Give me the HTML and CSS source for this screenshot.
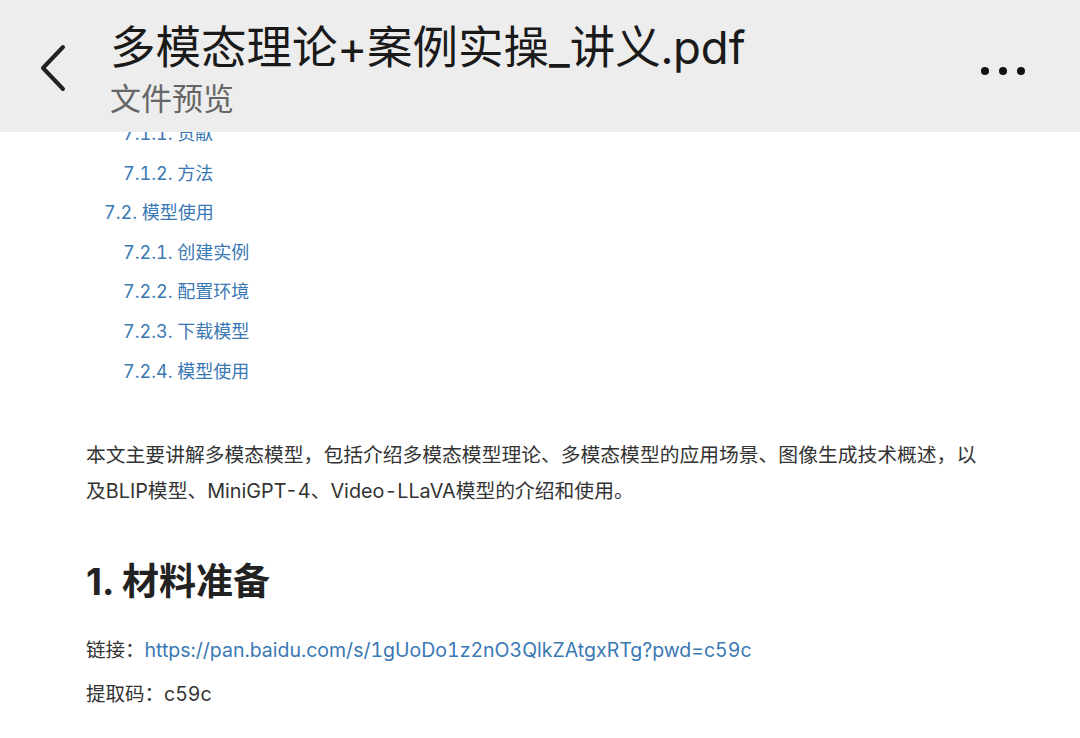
FILE: index.html
```html
<!DOCTYPE html>
<html lang="zh-CN">
<head>
<meta charset="utf-8">
<title>文件预览</title>
<link rel="stylesheet" href="styles.css">
</head>
<body>
<header class="topbar">
  <div class="back">
    <svg width="30" height="48" viewBox="0 0 30 48"><path d="M25 3 L5 24 L25 45" fill="none" stroke="#222" stroke-width="4" stroke-linecap="round" stroke-linejoin="round"/></svg>
  </div>
  <div class="titles">
    <div class="title">多模态理论+案例实操_讲义.pdf</div>
    <div class="subtitle">文件预览</div>
  </div>
  <div class="more"><span></span><span></span><span></span></div>
</header>
<main class="doc">
  <ul class="toc">
    <li class="l3">7.1.1. 贡献</li>
    <li class="l3">7.1.2. 方法</li>
    <li class="l2">7.2. 模型使用</li>
    <li class="l3">7.2.1. 创建实例</li>
    <li class="l3">7.2.2. 配置环境</li>
    <li class="l3">7.2.3. 下载模型</li>
    <li class="l3">7.2.4. 模型使用</li>
  </ul>
  <p class="intro">本文主要讲解多模态模型，包括介绍多模态模型理论、多模态模型的应用场景、图像生成技术概述，以及BLIP模型、MiniGPT-4、Video-LLaVA模型的介绍和使用。</p>
  <h1 class="h1">1. 材料准备</h1>
  <p class="line">链接：<a class="link">https://pan.baidu.com/s/1gUoDo1z2nO3QlkZAtgxRTg?pwd=c59c</a></p>
  <p class="line code">提取码：c59c</p>
</main>
</body>
</html>
```
FILE: styles.css
```css
html, body {
  margin: 0;
  padding: 0;
  background: #ffffff;
  font-family: "Inter", "Noto Sans CJK SC", sans-serif;
  font-variant-numeric: tabular-nums;
  color: #333;
}
.topbar {
  position: fixed;
  top: 0;
  left: 0;
  right: 0;
  height: 132px;
  background: #ededed;
  display: flex;
  align-items: flex-start;
  z-index: 10;
}
.back {
  width: 110px;
  padding-left: 38px;
  padding-top: 44px;
  box-sizing: border-box;
}
.back svg { display: block; }
.titles {
  flex: 1;
  padding-top: 19px;
}
.title {
  font-size: 45.5px;
  line-height: 58px;
  color: #1a1a1a;
}
.subtitle {
  font-size: 31px;
  line-height: 42px;
  color: #666;
  margin-top: 1px;
}
.more {
  display: flex;
  gap: 10px;
  padding-top: 67px;
  padding-right: 55px;
}
.more span {
  width: 8px;
  height: 8px;
  border-radius: 50%;
  background: #111;
}
.doc {
  padding: 114px 86px 0 86px;
}
.toc {
  list-style: none;
  margin: 0;
  padding: 0;
  font-size: 18px;
  line-height: 39.6px;
  color: #3a78b4;
}
.toc .l2 { padding-left: 18px; }
.toc .l3 { padding-left: 37px; }
.intro {
  margin: 46px 0 0 0;
  max-width: 905px;
  font-size: 19.8px;
  line-height: 36px;
  color: #333;
}
.h1 {
  margin: 48px 0 0 0;
  font-size: 37px;
  line-height: 50px;
  font-weight: bold;
  font-variant-numeric: normal;
  color: #222;
}
.line {
  margin: 28px 0 0 0;
  font-size: 19.5px;
  line-height: 30px;
  color: #333;
}
.line.code { margin-top: 14px; }
.link { color: #3a78b4; text-decoration: none; }
```
